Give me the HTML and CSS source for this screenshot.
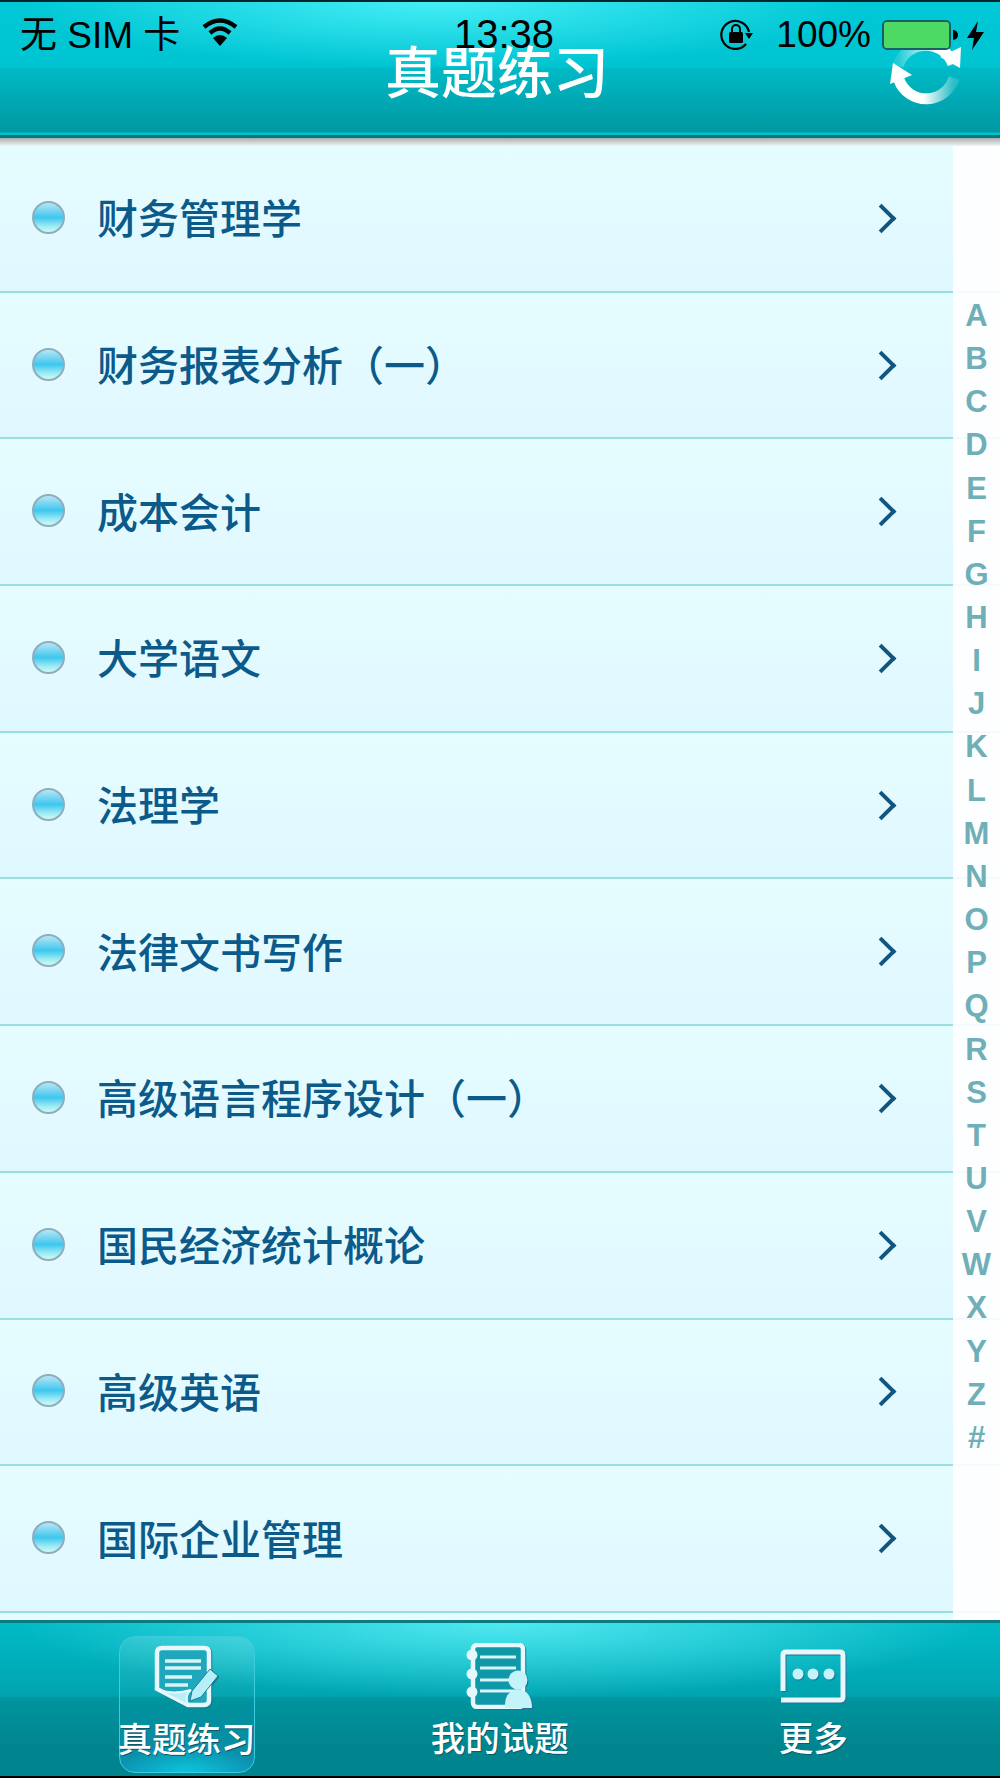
FILE: index.html
```html
<!DOCTYPE html>
<html lang="zh-CN">
<head>
  <meta charset="UTF-8">
  <title>真题练习</title>
  <link rel="stylesheet" href="styles.css">
</head>
<body>
  <header class="header">
    <h1 class="title">真题练习</h1>

    <svg class="refresh" viewBox="0 0 80 68" width="80" height="68">
      <defs>
        <linearGradient id="arcBottom" x1="0" y1="0" x2="1" y2="0">
          <stop offset="0.45" stop-color="#fff"/>
          <stop offset="1" stop-color="#fff" stop-opacity="0.15"/>
        </linearGradient>
        <linearGradient id="arcTop" x1="1" y1="0" x2="0" y2="0">
          <stop offset="0.3" stop-color="#fff"/>
          <stop offset="1" stop-color="#fff" stop-opacity="0.12"/>
        </linearGradient>
      </defs>
      <path d="M13 42 A29 29 0 0 0 68 40" fill="none" stroke="url(#arcBottom)" stroke-width="11"/>
      <path d="M67 26 A29 29 0 0 0 12 28" fill="none" stroke="url(#arcTop)" stroke-width="11"/>
      <polygon points="7,25 26,37 4,46" fill="#fff"/>
      <polygon points="74,30 54,19 75,9" fill="#fff"/>
    </svg>

    <div class="statusbar">
      <div class="status-left">
        <span>无 SIM 卡</span>
        <svg class="wifi" viewBox="0 0 36 28" width="36" height="28">
          <path d="M2 9 Q18 -4 34 9" fill="none" stroke="#000" stroke-width="4.5"/>
          <path d="M8 15 Q18 6 28 15" fill="none" stroke="#000" stroke-width="4.5"/>
          <path d="M18 28 L11 20 Q18 14 25 20 Z" fill="#000"/>
        </svg>
      </div>
      <div class="status-time">13:38</div>
      <div class="status-right">
        <svg class="lock" viewBox="0 0 33 32" width="33" height="32">
          <path d="M26 26 A14 14 0 1 1 29 14" fill="none" stroke="#000" stroke-width="2.2"/>
          <polygon points="25,15 33,15 29,21" fill="#000"/>
          <rect x="9" y="14" width="14" height="11" rx="1.5" fill="#000"/>
          <path d="M12 14 V11 A4 4 0 0 1 20 11 V14" fill="none" stroke="#000" stroke-width="2"/>
        </svg>
        <span class="percent">100%</span>
        <div class="battery"><div class="battery-fill"></div></div>
        <div class="battery-nub"></div>
        <svg class="bolt" viewBox="0 0 17 29" width="17" height="29">
          <polygon points="11,0 0,17 7,17 5,29 17,11 9,11" fill="#000"/>
        </svg>
      </div>
    </div>
  </header>

  <main class="content">
    <ul class="list">
      <li class="row"><div class="row-main"><span class="bullet"></span><span class="row-text">财务管理学</span><span class="chevron"></span></div><div class="row-gutter"></div></li>
      <li class="row"><div class="row-main"><span class="bullet"></span><span class="row-text">财务报表分析（一）</span><span class="chevron"></span></div><div class="row-gutter"></div></li>
      <li class="row"><div class="row-main"><span class="bullet"></span><span class="row-text">成本会计</span><span class="chevron"></span></div><div class="row-gutter"></div></li>
      <li class="row"><div class="row-main"><span class="bullet"></span><span class="row-text">大学语文</span><span class="chevron"></span></div><div class="row-gutter"></div></li>
      <li class="row"><div class="row-main"><span class="bullet"></span><span class="row-text">法理学</span><span class="chevron"></span></div><div class="row-gutter"></div></li>
      <li class="row"><div class="row-main"><span class="bullet"></span><span class="row-text">法律文书写作</span><span class="chevron"></span></div><div class="row-gutter"></div></li>
      <li class="row"><div class="row-main"><span class="bullet"></span><span class="row-text">高级语言程序设计（一）</span><span class="chevron"></span></div><div class="row-gutter"></div></li>
      <li class="row"><div class="row-main"><span class="bullet"></span><span class="row-text">国民经济统计概论</span><span class="chevron"></span></div><div class="row-gutter"></div></li>
      <li class="row"><div class="row-main"><span class="bullet"></span><span class="row-text">高级英语</span><span class="chevron"></span></div><div class="row-gutter"></div></li>
      <li class="row"><div class="row-main"><span class="bullet"></span><span class="row-text">国际企业管理</span><span class="chevron"></span></div><div class="row-gutter"></div></li>
      <li class="row"><div class="row-main"></div><div class="row-gutter"></div></li>
    </ul>

    <div class="index">
      <span>A</span><span>B</span><span>C</span><span>D</span><span>E</span><span>F</span><span>G</span>
      <span>H</span><span>I</span><span>J</span><span>K</span><span>L</span><span>M</span><span>N</span>
      <span>O</span><span>P</span><span>Q</span><span>R</span><span>S</span><span>T</span><span>U</span>
      <span>V</span><span>W</span><span>X</span><span>Y</span><span>Z</span><span>#</span>
    </div>
  </main>

  <nav class="tabbar">
    <div class="tab tab-active">
      <div class="tab-icon">
        <svg class="icon" viewBox="0 0 66 64" width="66" height="64">
          <path d="M3 44 V8 Q3 3 8 3 H50 Q55 3 55 8 V55 Q55 60 50 60 H34 Z" fill="#1fa8bc" stroke="#e6f8fc" stroke-width="4.5"/>
          <path d="M4 45 L34 60 Q30 50 37 45 Q20 50 4 45 Z" fill="#b5f0f8" stroke="#e6f8fc" stroke-width="2"/>
          <path d="M11 16 H47 M11 23 H47 M11 32 H38 M11 40 H34" stroke="#d8f4f8" stroke-width="3.5"/>
          <polygon points="56,24 64,31 47,52 36,56 38,46" fill="#b5f0f8" stroke="#1d7f9c" stroke-width="1"/>
        </svg>
      </div>
      <span class="tab-label">真题练习</span>
    </div>
    <div class="tab">
      <div class="tab-icon">
        <svg class="icon" viewBox="0 0 68 66" width="68" height="66">
          <rect x="7" y="2" width="50" height="62" rx="4" fill="#0f98a8" stroke="#e6f8fc" stroke-width="4.5"/>
          <circle cx="6" cy="12" r="5.5" fill="#e6f8fc"/>
          <circle cx="6" cy="31" r="5.5" fill="#e6f8fc"/>
          <circle cx="6" cy="49" r="5.5" fill="#e6f8fc"/>
          <path d="M14 14 H50 M14 25 H50 M14 37 H50 M14 48 H50" stroke="#d8f4f8" stroke-width="3"/>
          <circle cx="52" cy="37" r="9.5" fill="#c4f4fa"/>
          <path d="M39 65 Q38 48 52 46 Q66 48 66 65 Z" fill="#c4f4fa"/>
        </svg>
      </div>
      <span class="tab-label">我的试题</span>
    </div>
    <div class="tab">
      <div class="tab-icon">
        <svg class="icon" viewBox="0 0 67 55" width="67" height="55">
          <path d="M3 42 V6 Q3 3 6 3 H60 Q63 3 63 6 V48 Q63 51 60 51 H1" fill="none" stroke="#e6f8fc" stroke-width="5"/>
          <circle cx="18" cy="25" r="5.5" fill="#c4f4fa"/>
          <circle cx="33" cy="25" r="5.5" fill="#c4f4fa"/>
          <circle cx="49" cy="25" r="5.5" fill="#c4f4fa"/>
        </svg>
      </div>
      <span class="tab-label">更多</span>
    </div>
  </nav>
</body>
</html>
```

FILE: styles.css
```css
* {
  box-sizing: border-box;
}

body {
  margin: 0;
  width: 1000px;
  height: 1778px;
  display: flex;
  flex-direction: column;
  overflow: hidden;
  background-color: #fff;
  font-family: "Liberation Sans", "Noto Sans CJK SC", sans-serif;
}

.header {
  position: relative;
  height: 138px;
  flex: none;
  border-top: 2px solid #04262a;
  border-bottom: 3px solid #04777d;
  background:
    radial-gradient(ellipse 420px 65px at 440px 0, #45eef6 0%, #45eef600 100%),
    linear-gradient(#00c8d6 0, #00c4d2 65px, #00bac6 66px, #0098a2 130px, #00c4cc 131px);
  z-index: 2;
}

.title {
  margin: 0;
  padding: 39px 6px 0 0;
  text-align: center;
  color: #fff;
  font-size: 56px;
  line-height: 56px;
  font-weight: 500;
  font-family: "Noto Sans CJK SC", sans-serif;
}

.refresh {
  position: absolute;
  left: 886px;
  top: 36px;
}

.statusbar {
  position: absolute;
  left: 0;
  right: 0;
  top: 3px;
  padding: 0 16px 0 20px;
  display: grid;
  grid-template-columns: 1fr auto 1fr;
  align-items: center;
  color: #000;
  font-size: 37px;
}

.status-left {
  display: flex;
  align-items: center;
  gap: 22px;
  margin-bottom: 6px;
}

.status-time {
  font-size: 40px;
  margin-left: 4px;
  margin-bottom: 2px;
}

.status-right {
  display: flex;
  align-items: center;
  justify-content: flex-end;
}

.lock {
  margin-bottom: 3px;
}

.percent {
  margin-left: 23px;
  margin-right: 11px;
}

.battery {
  width: 69px;
  height: 30px;
  border: 2px solid #1a5f66;
  border-radius: 5px;
}

.battery-fill {
  height: 100%;
  background-color: #4cd964;
  border-radius: 3px;
}

.battery-nub {
  width: 5px;
  height: 10px;
  margin-left: 2px;
  background-color: #000;
  border-radius: 0 5px 5px 0;
}

.bolt {
  margin-left: 9px;
}

.content {
  position: relative;
  flex: 1;
  min-height: 0;
  overflow: hidden;
}

.list {
  margin: 0;
  padding: 8px 0 0;
  list-style: none;
  background: linear-gradient(#a8adad, #e6ecec 7px, #f4f6f6 8px) no-repeat;
  background-size: 100% 8px;
}

.row {
  height: 146.7px;
  display: flex;
}

.row-main {
  flex: 1;
  display: flex;
  align-items: center;
  padding: 0 61px 0 32px;
  border-bottom: 2px solid #9adfe0;
  background: linear-gradient(#e6fdff, #dff7ff);
}

.row-gutter {
  width: 47px;
  border-bottom: 2px solid #f2fafb;
  background-color: #fdfeff;
}

.bullet {
  width: 33px;
  height: 33px;
  flex: none;
  margin-bottom: 2px;
  border: 2px solid #8fadba;
  border-radius: 50%;
  background: linear-gradient(#b4e8f6 0, #7ad6f2 25%, #3fc6ee 50%, #9cebf4 80%, #d0f8f2 100%);
}

.row-text {
  flex: 1;
  margin-left: 32px;
  padding-bottom: 4px;
  color: #0b5a8a;
  font-size: 41px;
  font-weight: 500;
  font-family: "Noto Sans CJK SC", sans-serif;
}

.chevron {
  width: 21px;
  height: 21px;
  flex: none;
  border-top: 4px solid #11567f;
  border-right: 4px solid #11567f;
  transform: rotate(45deg);
}

.index {
  position: absolute;
  top: 0;
  right: 0;
  bottom: 5px;
  width: 47px;
  display: flex;
  flex-direction: column;
  justify-content: center;
  align-items: center;
  color: #6fafb7;
  font-size: 31px;
  font-weight: 700;
  line-height: 43.15px;
}

.tabbar {
  height: 158px;
  flex: none;
  display: flex;
  align-items: flex-start;
  padding: 13px 30px 0;
  border-top: 3px solid #0c7a80;
  border-bottom: 2px solid #000;
  background:
    radial-gradient(ellipse 480px 75px at 500px 0, #50e8f0 0%, #50e8f000 100%),
    linear-gradient(#00bac6 0, #00a4b0 73px, #00959f 75px, #00858f 125px);
}

.tab {
  flex: 1;
  height: 137px;
  display: flex;
  flex-direction: column;
  align-items: center;
}

.tab-active {
  flex: none;
  width: 136px;
  margin: 0 88.5px 0 88.5px;
  border: 1px solid #3ccbe0;
  border-radius: 16px;
  background:
    radial-gradient(ellipse 70px 26px at 50% 100%, #0cc4dc 0%, #0cc4dc00 100%),
    linear-gradient(#ffffff22, #0a9ab800 50%, #0e94b4 100%);
}

.tab-icon {
  height: 80px;
  display: flex;
  align-items: center;
  justify-content: center;
}

.icon {
  filter: drop-shadow(1px 1px 0 #256f94);
}

.tab-label {
  color: #fff;
  font-size: 34.5px;
  line-height: 40px;
  font-weight: 500;
  font-family: "Noto Sans CJK SC", sans-serif;
  white-space: nowrap;
  text-shadow: 1px 1px 0 #0b5a6a;
}
```
